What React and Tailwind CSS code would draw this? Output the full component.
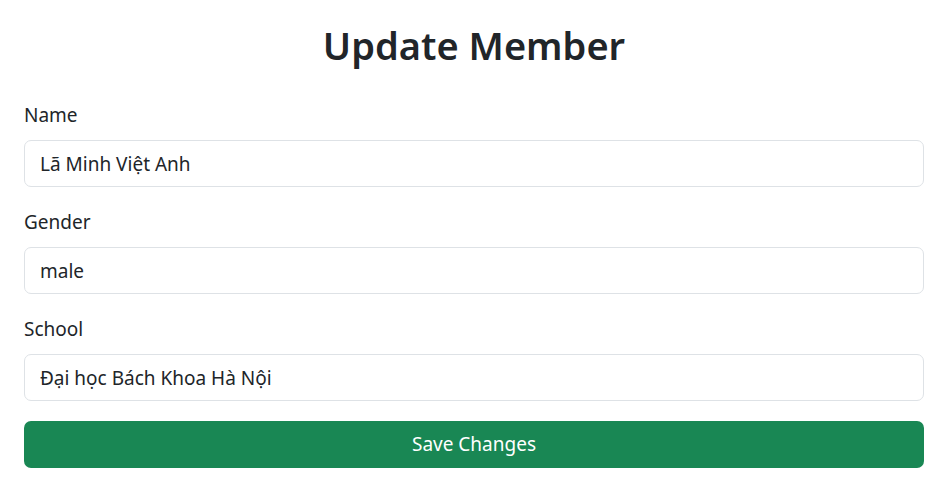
export default function App() {
  return (
    <div className="min-h-screen bg-white text-[#212529] font-['Noto_Sans',_'Liberation_Sans',_sans-serif] pl-6 pr-[22px] pt-[20px]">
      <h1 className="text-center text-[38px] leading-[50px] font-semibold mb-[30px]">Update Member</h1>

      <form onSubmit={(e) => e.preventDefault()}>
        <div className="mb-5">
          <label className="block text-[19px] leading-[30px] mb-[10px]">Name</label>
          <input
            className="block w-full h-[47px] px-[15px] text-[19px] border border-[#dee2e6] rounded-[7px] outline-none"
            defaultValue="Lã Minh Việt Anh"
          />
        </div>

        <div className="mb-5">
          <label className="block text-[19px] leading-[30px] mb-[10px]">Gender</label>
          <input
            className="block w-full h-[47px] px-[15px] text-[19px] border border-[#dee2e6] rounded-[7px] outline-none"
            defaultValue="male"
          />
        </div>

        <div className="mb-5">
          <label className="block text-[19px] leading-[30px] mb-[10px]">School</label>
          <input
            className="block w-full h-[47px] px-[15px] text-[19px] border border-[#dee2e6] rounded-[7px] outline-none"
            defaultValue="Đại học Bách Khoa Hà Nội"
          />
        </div>

        <button
          type="submit"
          className="w-full h-[47px] bg-[#198754] text-white text-[19px] rounded-[7px]"
        >
          Save Changes
        </button>
      </form>
    </div>
  );
}
